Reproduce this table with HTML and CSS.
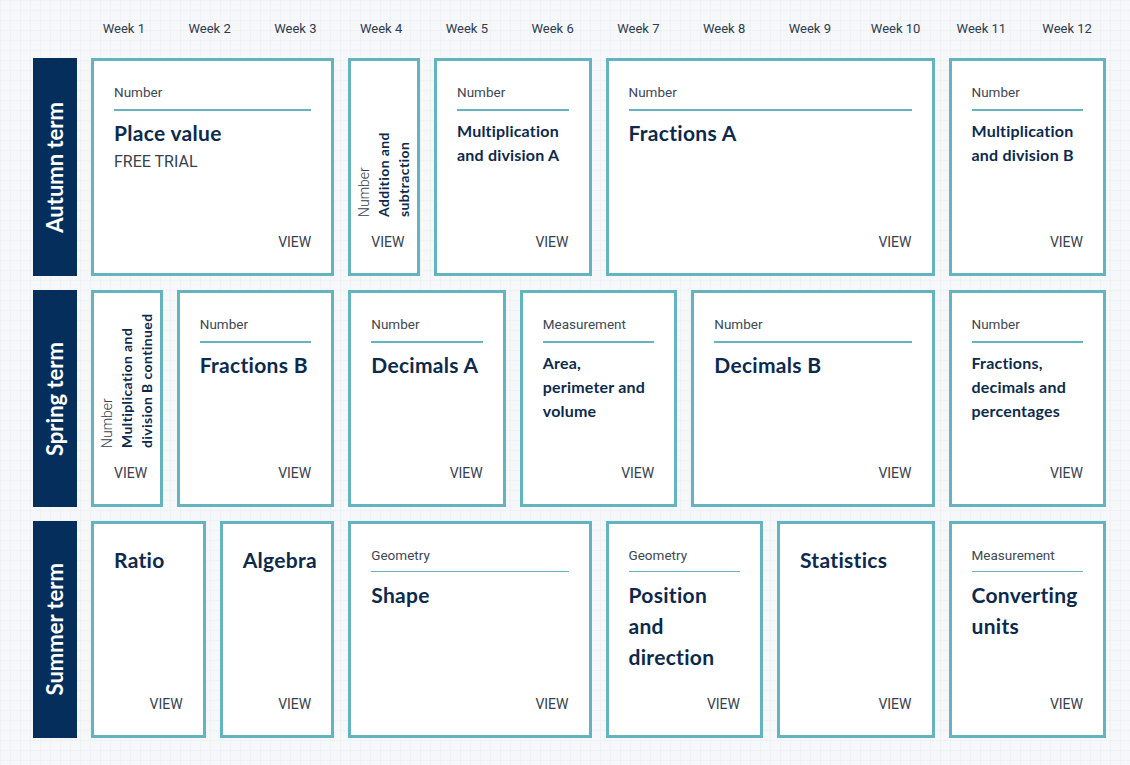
FILE: index.html
```html
<!DOCTYPE html>
<html lang="en">
<head>
<meta charset="utf-8">
<title>Scheme of learning</title>
<link rel="stylesheet" href="styles.css">
</head>
<body>
<div class="planner">
  <div class="corner"></div>
  <div class="week">Week 1</div>
  <div class="week">Week 2</div>
  <div class="week">Week 3</div>
  <div class="week">Week 4</div>
  <div class="week">Week 5</div>
  <div class="week">Week 6</div>
  <div class="week">Week 7</div>
  <div class="week">Week 8</div>
  <div class="week">Week 9</div>
  <div class="week">Week 10</div>
  <div class="week">Week 11</div>
  <div class="week">Week 12</div>

  <!-- Autumn -->
  <div class="term"><span>Autumn term</span></div>
  <div class="card span-3">
    <div class="card-body">
      <div class="cat">Number</div>
      <div class="title">Place value</div>
      <div class="trial">FREE TRIAL</div>
    </div>
    <div class="view">VIEW</div>
  </div>
  <div class="card narrow span-1">
    <div class="vbody">
      <div class="vtext">
        <div class="vcat">Number</div>
        <div class="vtitle">Addition and<br>subtraction</div>
      </div>
    </div>
    <div class="view">VIEW</div>
  </div>
  <div class="card span-2">
    <div class="card-body">
      <div class="cat">Number</div>
      <div class="title small">Multiplication<br>and division A</div>
    </div>
    <div class="view">VIEW</div>
  </div>
  <div class="card span-4">
    <div class="card-body">
      <div class="cat">Number</div>
      <div class="title">Fractions A</div>
    </div>
    <div class="view">VIEW</div>
  </div>
  <div class="card span-2">
    <div class="card-body">
      <div class="cat">Number</div>
      <div class="title small">Multiplication<br>and division B</div>
    </div>
    <div class="view">VIEW</div>
  </div>

  <!-- Spring -->
  <div class="term"><span>Spring term</span></div>
  <div class="card narrow span-1">
    <div class="vbody">
      <div class="vtext">
        <div class="vcat">Number</div>
        <div class="vtitle">Multiplication and<br>division B continued</div>
      </div>
    </div>
    <div class="view">VIEW</div>
  </div>
  <div class="card span-2">
    <div class="card-body">
      <div class="cat">Number</div>
      <div class="title">Fractions B</div>
    </div>
    <div class="view">VIEW</div>
  </div>
  <div class="card span-2">
    <div class="card-body">
      <div class="cat">Number</div>
      <div class="title">Decimals A</div>
    </div>
    <div class="view">VIEW</div>
  </div>
  <div class="card span-2">
    <div class="card-body">
      <div class="cat">Measurement</div>
      <div class="title small">Area,<br>perimeter and<br>volume</div>
    </div>
    <div class="view">VIEW</div>
  </div>
  <div class="card span-3">
    <div class="card-body">
      <div class="cat">Number</div>
      <div class="title">Decimals B</div>
    </div>
    <div class="view">VIEW</div>
  </div>
  <div class="card span-2">
    <div class="card-body">
      <div class="cat">Number</div>
      <div class="title small">Fractions,<br>decimals and<br>percentages</div>
    </div>
    <div class="view">VIEW</div>
  </div>

  <!-- Summer -->
  <div class="term"><span>Summer term</span></div>
  <div class="pair span-3">
    <div class="card summer">
      <div class="card-body">
        <div class="title tall">Ratio</div>
      </div>
      <div class="view">VIEW</div>
    </div>
    <div class="card summer">
      <div class="card-body">
        <div class="title tall">Algebra</div>
      </div>
      <div class="view">VIEW</div>
    </div>
  </div>
  <div class="card summer span-3">
    <div class="card-body">
      <div class="cat thin">Geometry</div>
      <div class="title tall">Shape</div>
    </div>
    <div class="view">VIEW</div>
  </div>
  <div class="card summer span-2">
    <div class="card-body">
      <div class="cat thin">Geometry</div>
      <div class="title tall">Position<br>and<br>direction</div>
    </div>
    <div class="view">VIEW</div>
  </div>
  <div class="card summer span-2">
    <div class="card-body">
      <div class="title tall">Statistics</div>
    </div>
    <div class="view">VIEW</div>
  </div>
  <div class="card summer span-2">
    <div class="card-body">
      <div class="cat thin">Measurement</div>
      <div class="title tall">Converting<br>units</div>
    </div>
    <div class="view">VIEW</div>
  </div>
</div>
</body>
</html>
```

FILE: styles.css
```css
* { box-sizing: border-box; }

html, body {
  margin: 0;
  padding: 0;
}

body {
  width: 1130px;
  height: 765px;
  overflow: hidden;
  background-color: #f5f7f9;
  background-image:
    linear-gradient(#eef2f5 1px, transparent 1px),
    linear-gradient(90deg, #eef2f5 1px, transparent 1px);
  background-size: 10px 10px;
  font-family: Roboto, "Liberation Sans", sans-serif;
  color: #0d2a4c;
}

.planner {
  display: grid;
  grid-template-columns: 44px repeat(12, 1fr);
  grid-template-rows: 30px 218px 217px 217px;
  column-gap: 14px;
  row-gap: 14px;
  padding: 14px 24px 0 33px;
  width: 1130px;
}

.week {
  font-size: 13px;
  line-height: 30px;
  color: #2f3b4b;
  text-align: center;
  padding-right: 6px;
  white-space: nowrap;
}

.term {
  background: #062e5d;
  display: flex;
  align-items: center;
  justify-content: center;
}

.term span {
  writing-mode: vertical-rl;
  transform: rotate(180deg);
  color: #ffffff;
  font-family: Lato, "Open Sans", sans-serif;
  font-weight: 700;
  font-size: 22px;
  line-height: 24px;
  white-space: nowrap;
}

.span-1 { grid-column: span 1; }
.span-2 { grid-column: span 2; }
.span-3 { grid-column: span 3; }
.span-4 { grid-column: span 4; }

.pair {
  display: flex;
  gap: 14px;
}

.pair .card { flex: 1 1 0; min-width: 0; }

.card {
  background: #ffffff;
  border: 3px solid #64b4c0;
  padding: 21px 20px 23px;
  display: flex;
  flex-direction: column;
  min-width: 0;
}

.card-body {
  flex: 1;
}

.cat {
  font-size: 13.5px;
  line-height: 20px;
  color: #3d4753;
  padding-bottom: 7px;
  border-bottom: 2px solid #64b4c0;
  margin-bottom: 8px;
  white-space: nowrap;
}

.cat.thin {
  border-bottom-width: 1px;
  padding-bottom: 6px;
  margin-bottom: 7px;
}

.title {
  font-family: Lato, "Open Sans", sans-serif;
  font-weight: 700;
  font-size: 21px;
  letter-spacing: 0.3px;
  line-height: 28px;
  color: #0d2a4c;
  white-space: nowrap;
}

.title.small {
  font-size: 16px;
  letter-spacing: 0.2px;
  line-height: 24px;
}

.title.tall {
  font-size: 21px;
  line-height: 31px;
}

.summer .card-body > .title.tall:first-child {
  margin-top: -1px;
}

.trial {
  font-size: 16px;
  line-height: 22px;
  color: #37414d;
  margin-top: 4px;
}

.view {
  font-size: 14px;
  line-height: 16px;
  color: #37414d;
  text-align: right;
  white-space: nowrap;
}

.narrow .view {
  text-align: left;
}

.vbody {
  flex: 1;
  display: flex;
  justify-content: center;
  align-items: stretch;
  padding-bottom: 17px;
  min-height: 0;
}

.vtext {
  writing-mode: vertical-rl;
  transform: rotate(180deg);
  white-space: nowrap;
  flex: none;
}

.vcat {
  font-size: 14px;
  line-height: 20px;
  color: #37414d;
  font-weight: 300;
}

.vtitle {
  font-family: Lato, "Open Sans", sans-serif;
  font-weight: 700;
  font-size: 14px;
  letter-spacing: 0.4px;
  line-height: 20px;
  color: #0d2a4c;
}
```
